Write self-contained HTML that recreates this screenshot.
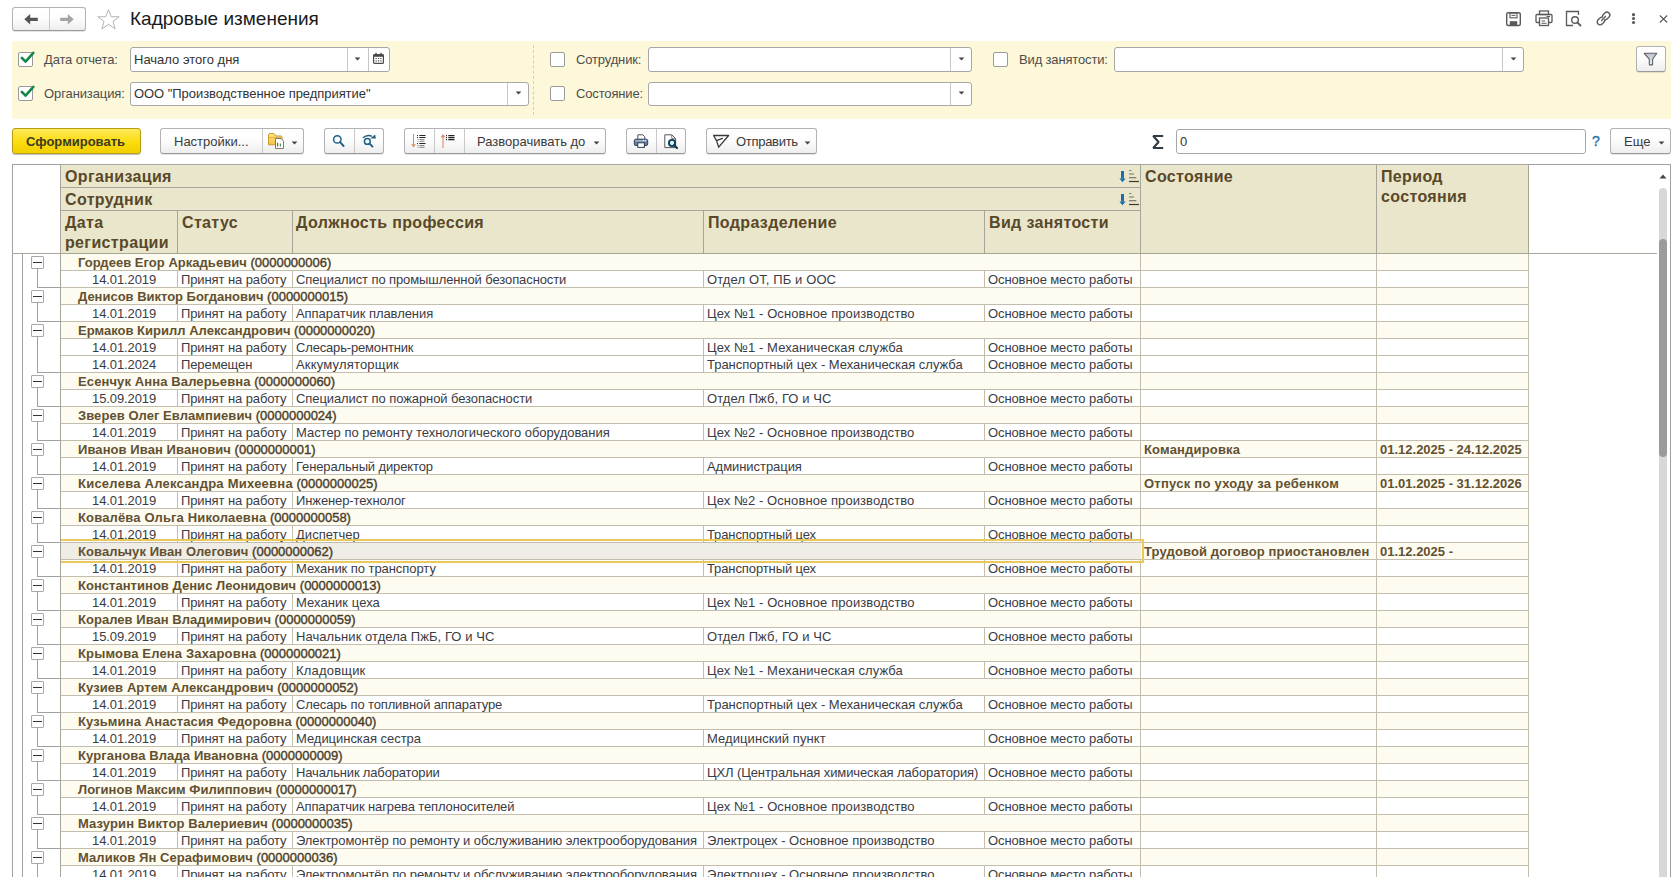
<!DOCTYPE html>
<html><head><meta charset="utf-8"><title>Кадровые изменения</title>
<style>
html,body{margin:0;padding:0;background:#fff;}
body{width:1676px;height:877px;overflow:hidden;position:relative;font-family:"Liberation Sans",sans-serif;}
.t{position:absolute;white-space:nowrap;font-family:"Liberation Sans",sans-serif;}
.b{position:absolute;}
</style></head><body>
<div class="b" style="left:12px;top:7px;width:74px;height:24px;background:linear-gradient(#ffffff,#fdfdfd 45%,#eeeeee);box-sizing:border-box;border:1px solid #b2b2b2;border-bottom-color:#9a9a9a;border-radius:3px;box-shadow:0 1px 0 rgba(0,0,0,.10);"></div>
<div class="b" style="left:49px;top:8px;width:1px;height:22px;background:#c8c8c8;"></div>
<svg class="b" style="left:24px;top:14px;" width="14" height="11" viewBox="0 0 14 11"><path d="M0.3 5.3L6.2 0V3.8H13.8V6.9H6.2V10.6Z" fill="#555"/></svg>
<svg class="b" style="left:60px;top:14px;" width="14" height="11" viewBox="0 0 14 11"><path d="M13.7 5.3L7.8 0V3.8H0.2V6.9H7.8V10.6Z" fill="#a4a4a4"/></svg>
<svg class="b" style="left:96px;top:7px;" width="25" height="24" viewBox="0 0 25 24"><path d="M12.5 2.6L15.2 9.7L23.2 9.8L17 14.4L19.1 21.9L12.5 17.3L5.9 21.9L8 14.4L1.8 9.8L9.8 9.7Z" fill="none" stroke="#b4b4b4" stroke-width="1" stroke-linejoin="miter"/></svg>
<div class="t" style="left:130px;top:7.42px;font-size:19px;line-height:24px;color:#1a1a1a;">Кадровые изменения</div>
<svg class="b" style="left:1505px;top:11px;" width="17" height="16" viewBox="0 0 17 16"><rect x="1.7" y="1.7" width="13.6" height="12.8" rx="1.5" fill="none" stroke="#5a5a5a" stroke-width="1.4"/><rect x="5" y="2" width="7" height="4.8" fill="none" stroke="#5a5a5a" stroke-width="1.1"/><path d="M6.5 4.4H10.5" stroke="#5a5a5a" stroke-width="1"/><rect x="4.8" y="10.2" width="7.4" height="4" fill="#5a5a5a"/></svg>
<svg class="b" style="left:1535px;top:10px;" width="18" height="17" viewBox="0 0 18 17"><rect x="4.5" y="1" width="9" height="3.5" fill="none" stroke="#5a5a5a" stroke-width="1.3"/><path d="M4 12.5H2Q1 12.5 1 11.5V5.5Q1 4.5 2 4.5H16Q17 4.5 17 5.5V11.5Q17 12.5 16 12.5H14" fill="none" stroke="#5a5a5a" stroke-width="1.3"/><rect x="4.5" y="8" width="9" height="7.5" fill="#fff" stroke="#5a5a5a" stroke-width="1.3"/><path d="M6.5 11H10M6.5 13.3H11.5" stroke="#5a5a5a" stroke-width="1"/><path d="M11.5 6.5H15" stroke="#5a5a5a" stroke-width="1"/></svg>
<svg class="b" style="left:1565px;top:10px;" width="18" height="17" viewBox="0 0 18 17"><path d="M8 15.5H1.5V1.5H13.5V5" fill="none" stroke="#5a5a5a" stroke-width="1.3"/><circle cx="10" cy="10" r="3.3" fill="none" stroke="#5a5a5a" stroke-width="1.4"/><path d="M12.3 12.3L15.5 15.5" stroke="#5a5a5a" stroke-width="1.8" stroke-linecap="round"/></svg>
<svg class="b" style="left:1595px;top:10px;" width="17" height="17" viewBox="0 0 17 17"><g transform="rotate(-45 8.5 8.5)" fill="none" stroke="#5a5a5a" stroke-width="1.4"><rect x="0.8" y="5.6" width="8.2" height="5.8" rx="2.9"/><rect x="8" y="5.6" width="8.2" height="5.8" rx="2.9"/></g><path d="M6.3 10.7L10.7 6.3" stroke="#fff" stroke-width="2.6"/><path d="M6.6 10.4L10.4 6.6" stroke="#5a5a5a" stroke-width="1.4" stroke-linecap="round"/></svg>
<svg class="b" style="left:1630px;top:12px;" width="7" height="13" viewBox="0 0 7 13"><circle cx="3.5" cy="2.7" r="1.6" fill="#5a5a5a"/><circle cx="3.5" cy="6.5" r="1.6" fill="#5a5a5a"/><circle cx="3.5" cy="10.5" r="1.6" fill="#5a5a5a"/></svg>
<svg class="b" style="left:1659px;top:15px;" width="9" height="8" viewBox="0 0 9 8"><path d="M0.8 0.5L8.2 7.5M8.2 0.5L0.8 7.5" stroke="#5a5a5a" stroke-width="1.1"/></svg>
<div class="b" style="left:12px;top:41px;width:1659px;height:78px;background:#fef8da;"></div>
<div class="b" style="left:18px;top:52px;width:15px;height:15px;background:#fff;box-sizing:border-box;border:1px solid #9a9a9a;border-radius:2px;"></div>
<svg class="b" style="left:19px;top:50px;" width="17" height="17" viewBox="0 0 17 17"><path d="M2.9 8L6.6 11.6L14.3 2.8" fill="none" stroke="#17864a" stroke-width="2.6" stroke-linecap="round" stroke-linejoin="round"/></svg>
<div class="t" style="left:44px;top:51.50px;font-size:13px;line-height:16px;color:#4d4d4d;letter-spacing:-0.15px;">Дата отчета:</div>
<div class="b" style="left:130px;top:47px;width:260px;height:25px;background:#fff;box-sizing:border-box;border:1px solid #a7a7a7;border-radius:3px;"></div>
<div class="b" style="left:347px;top:48px;width:1px;height:23px;background:#c6c6c6;"></div>
<div class="b" style="left:368px;top:48px;width:1px;height:23px;background:#c6c6c6;"></div>
<div class="t" style="left:134px;top:51.50px;font-size:13px;line-height:16px;color:#333;">Начало этого дня</div>
<svg class="b" style="left:354px;top:57px;" width="7" height="4" viewBox="0 0 7 4"><path d="M0.6 0.4H6.4L3.5 3.4Z" fill="#444"/></svg>
<svg class="b" style="left:373px;top:52px;" width="11" height="12" viewBox="0 0 11 12"><rect x="0.6" y="2.6" width="9.8" height="8.8" rx="1" fill="none" stroke="#4a4a4a" stroke-width="1.2"/><rect x="0.6" y="2.6" width="9.8" height="2.2" fill="#4a4a4a"/><path d="M3 0.8V3M8 0.8V3" stroke="#4a4a4a" stroke-width="1.3"/><path d="M2.5 6.5h1.3M4.85 6.5h1.3M7.2 6.5h1.3M2.5 8.9h1.3M4.85 8.9h1.3M7.2 8.9h1.3" stroke="#555" stroke-width="1.2"/></svg>
<div class="b" style="left:18px;top:86px;width:15px;height:15px;background:#fff;box-sizing:border-box;border:1px solid #9a9a9a;border-radius:2px;"></div>
<svg class="b" style="left:19px;top:84px;" width="17" height="17" viewBox="0 0 17 17"><path d="M2.9 8L6.6 11.6L14.3 2.8" fill="none" stroke="#17864a" stroke-width="2.6" stroke-linecap="round" stroke-linejoin="round"/></svg>
<div class="t" style="left:44px;top:85.50px;font-size:13px;line-height:16px;color:#4d4d4d;letter-spacing:-0.1px;">Организация:</div>
<div class="b" style="left:130px;top:82px;width:399px;height:24px;background:#fff;box-sizing:border-box;border:1px solid #a7a7a7;border-radius:3px;"></div>
<div class="b" style="left:507px;top:83px;width:1px;height:22px;background:#c6c6c6;"></div>
<div class="t" style="left:134px;top:85.50px;font-size:13px;line-height:16px;color:#333;letter-spacing:-0.05px;">ООО &quot;Производственное предприятие&quot;</div>
<svg class="b" style="left:515px;top:91px;" width="7" height="4" viewBox="0 0 7 4"><path d="M0.6 0.4H6.4L3.5 3.4Z" fill="#444"/></svg>
<div class="b" style="left:533px;top:45px;width:0;height:70px;border-left:1px dashed #d9d0a8;"></div>
<div class="b" style="left:550px;top:52px;width:15px;height:15px;background:#fff;box-sizing:border-box;border:1px solid #9a9a9a;border-radius:2px;"></div>
<div class="t" style="left:576px;top:51.50px;font-size:13px;line-height:16px;color:#4d4d4d;letter-spacing:-0.15px;">Сотрудник:</div>
<div class="b" style="left:648px;top:47px;width:324px;height:25px;background:#fff;box-sizing:border-box;border:1px solid #a7a7a7;border-radius:3px;"></div>
<div class="b" style="left:950px;top:48px;width:1px;height:23px;background:#c6c6c6;"></div>
<svg class="b" style="left:958px;top:57px;" width="7" height="4" viewBox="0 0 7 4"><path d="M0.6 0.4H6.4L3.5 3.4Z" fill="#444"/></svg>
<div class="b" style="left:550px;top:86px;width:15px;height:15px;background:#fff;box-sizing:border-box;border:1px solid #9a9a9a;border-radius:2px;"></div>
<div class="t" style="left:576px;top:85.50px;font-size:13px;line-height:16px;color:#4d4d4d;letter-spacing:-0.15px;">Состояние:</div>
<div class="b" style="left:648px;top:82px;width:324px;height:24px;background:#fff;box-sizing:border-box;border:1px solid #a7a7a7;border-radius:3px;"></div>
<div class="b" style="left:950px;top:83px;width:1px;height:22px;background:#c6c6c6;"></div>
<svg class="b" style="left:958px;top:91px;" width="7" height="4" viewBox="0 0 7 4"><path d="M0.6 0.4H6.4L3.5 3.4Z" fill="#444"/></svg>
<div class="b" style="left:993px;top:52px;width:15px;height:15px;background:#fff;box-sizing:border-box;border:1px solid #9a9a9a;border-radius:2px;"></div>
<div class="t" style="left:1019px;top:51.50px;font-size:13px;line-height:16px;color:#4d4d4d;letter-spacing:-0.15px;">Вид занятости:</div>
<div class="b" style="left:1114px;top:47px;width:410px;height:25px;background:#fff;box-sizing:border-box;border:1px solid #a7a7a7;border-radius:3px;"></div>
<div class="b" style="left:1502px;top:48px;width:1px;height:23px;background:#c6c6c6;"></div>
<svg class="b" style="left:1510px;top:57px;" width="7" height="4" viewBox="0 0 7 4"><path d="M0.6 0.4H6.4L3.5 3.4Z" fill="#444"/></svg>
<div class="b" style="left:1636px;top:46px;width:30px;height:26px;background:linear-gradient(#ffffff,#fdfdfd 45%,#eeeeee);box-sizing:border-box;border:1px solid #b2b2b2;border-bottom-color:#9a9a9a;border-radius:3px;box-shadow:0 1px 0 rgba(0,0,0,.10);"></div>
<svg class="b" style="left:1642px;top:51px;" width="17" height="16" viewBox="0 0 17 16"><defs><linearGradient id="fn" x1="0" y1="0" x2="0" y2="1"><stop offset="0" stop-color="#b9c2cc"/><stop offset="1" stop-color="#eef2f5"/></linearGradient></defs><path d="M2.2 2.3H14.8L10.6 8.2V13.2Q10.6 13.9 9.9 13.9H8Q7.3 13.9 7.3 13.2V8.2Z" fill="url(#fn)" stroke="#5f5f5f" stroke-width="1.1" stroke-linejoin="round"/></svg>
<div class="b" style="left:12px;top:128px;width:129px;height:26px;background:linear-gradient(#ffe95a,#fbdc0c 55%,#f2cf00);box-sizing:border-box;border:1px solid #b89d14;border-radius:3px;box-shadow:0 1px 1px rgba(0,0,0,.25);"></div>
<div class="t" style="left:26px;top:133.50px;font-size:13px;line-height:16px;font-weight:700;color:#3d3a26;">Сформировать</div>
<div class="b" style="left:160px;top:128px;width:144px;height:26px;background:linear-gradient(#ffffff,#fdfdfd 45%,#eeeeee);box-sizing:border-box;border:1px solid #b2b2b2;border-bottom-color:#9a9a9a;border-radius:3px;box-shadow:0 1px 0 rgba(0,0,0,.10);"></div>
<div class="b" style="left:262px;top:129px;width:1px;height:24px;background:#c8c8c8;"></div>
<div class="t" style="left:174px;top:133.50px;font-size:13px;line-height:16px;color:#3a3a3a;">Настройки...</div>
<svg class="b" style="left:266px;top:132px;" width="20" height="18" viewBox="0 0 20 18"><defs><linearGradient id="fg" x1="0" y1="0" x2="0" y2="1"><stop offset="0" stop-color="#ffe98a"/><stop offset="1" stop-color="#f0c040"/></linearGradient></defs><path d="M2.5 12.8V3.2Q2.5 1.5 4.2 1.5H7.2Q8.6 1.5 9.2 3L9.6 4H15Q16 4 16 5V12.8Z" fill="url(#fg)" stroke="#c99a2a" stroke-width="1"/><path d="M2.5 5.5H16" stroke="#d9ac3a" stroke-width=".8"/><path d="M9.5 6.5H15L17.5 9V16.5H9.5Z" fill="#fff" stroke="#7a7a7a" stroke-width="1"/><path d="M11.6 14.5V10.8" stroke="#c23a3a" stroke-width="1.2"/><path d="M14.4 14.5V11.5" stroke="#3aa04a" stroke-width="1.2"/></svg>
<svg class="b" style="left:291px;top:141px;" width="7" height="4" viewBox="0 0 7 4"><path d="M0.6 0.4H6.4L3.5 3.4Z" fill="#444"/></svg>
<div class="b" style="left:324px;top:128px;width:60px;height:26px;background:linear-gradient(#ffffff,#fdfdfd 45%,#eeeeee);box-sizing:border-box;border:1px solid #b2b2b2;border-bottom-color:#9a9a9a;border-radius:3px;box-shadow:0 1px 0 rgba(0,0,0,.10);"></div>
<div class="b" style="left:354px;top:129px;width:1px;height:24px;background:#c8c8c8;"></div>
<svg class="b" style="left:330px;top:132px;" width="18" height="18" viewBox="0 0 18 18"><circle cx="7.3" cy="7.4" r="3.7" fill="none" stroke="#1f5f87" stroke-width="1.5"/><path d="M10 10.2L13.6 14" stroke="#1f5f87" stroke-width="1.9" stroke-linecap="round"/></svg>
<svg class="b" style="left:360px;top:132px;" width="18" height="18" viewBox="0 0 18 18"><circle cx="7.3" cy="9.4" r="2.9" fill="none" stroke="#1f5f87" stroke-width="1.5"/><path d="M9.5 11.6L12.5 14.5" stroke="#1f5f87" stroke-width="1.8" stroke-linecap="round"/><path d="M3 5.8Q7 2.2 11.8 4.2" fill="none" stroke="#1f5f87" stroke-width="1.5"/><path d="M10.2 6.4L15.8 6.6L15.2 2.4Z" fill="#1f5f87"/></svg>
<div class="b" style="left:404px;top:128px;width:202px;height:26px;background:linear-gradient(#ffffff,#fdfdfd 45%,#eeeeee);box-sizing:border-box;border:1px solid #b2b2b2;border-bottom-color:#9a9a9a;border-radius:3px;box-shadow:0 1px 0 rgba(0,0,0,.10);"></div>
<div class="b" style="left:434px;top:129px;width:1px;height:24px;background:#c8c8c8;"></div>
<div class="b" style="left:464px;top:129px;width:1px;height:24px;background:#c8c8c8;"></div>
<svg class="b" style="left:410px;top:133px;" width="20" height="17" viewBox="0 0 20 17"><path d="M3.5 1V13.5" stroke="#dc8a68" stroke-width="1.1"/><path d="M1.2 11.2L3.5 14.6L5.8 11.2Z" fill="#dc8a68"/><path d="M7 2.5H8M9.3 2.5H15.5M7 4.5H8M9.3 4.5H15.5" stroke="#222" stroke-width="1.1"/><path d="M7.5 6.5H8.5M9.5 6.5H14.5M7.5 8.3H8.5M9.5 8.3H14.5" stroke="#666" stroke-width=".8"/><path d="M7 10.5H8M9.3 10.5H15.5" stroke="#222" stroke-width="1.1"/><path d="M7.5 12.5H8.5M9.5 12.5H14.5M7.5 14.3H8.5M9.5 14.3H14.5" stroke="#666" stroke-width=".8"/></svg>
<svg class="b" style="left:440px;top:132px;" width="20" height="17" viewBox="0 0 20 17"><path d="M3 3V16" stroke="#dc8a68" stroke-width="1.1"/><path d="M0.7 5.3L3 1.9L5.3 5.3Z" fill="#dc8a68"/><path d="M6 3.6H7M8.3 3.6H14.5M6 5.6H7M8.3 5.6H14.5M6 7.6H7M8.3 7.6H14.5" stroke="#222" stroke-width="1.1"/></svg>
<div class="t" style="left:477px;top:133.50px;font-size:13px;line-height:16px;color:#3a3a3a;">Разворачивать до</div>
<svg class="b" style="left:593px;top:141px;" width="7" height="4" viewBox="0 0 7 4"><path d="M0.6 0.4H6.4L3.5 3.4Z" fill="#444"/></svg>
<div class="b" style="left:626px;top:128px;width:60px;height:26px;background:linear-gradient(#ffffff,#fdfdfd 45%,#eeeeee);box-sizing:border-box;border:1px solid #b2b2b2;border-bottom-color:#9a9a9a;border-radius:3px;box-shadow:0 1px 0 rgba(0,0,0,.10);"></div>
<div class="b" style="left:656px;top:129px;width:1px;height:24px;background:#c8c8c8;"></div>
<svg class="b" style="left:632px;top:133px;" width="18" height="16" viewBox="0 0 18 16"><path d="M5.8 6V1.8H10.8L12.8 3.8V6" fill="#fff" stroke="#4a5560" stroke-width="1"/><rect x="2.3" y="6.2" width="13.4" height="6.3" rx="1.6" fill="#62809f" stroke="#2f3d52" stroke-width="1"/><path d="M3.5 7.9H14.5" stroke="#d0dae8" stroke-width=".9"/><path d="M11 7.3H12M13 7.3H14" stroke="#fff" stroke-width="1"/><rect x="5.8" y="9.8" width="6.6" height="4.6" fill="#fff" stroke="#2f3d52" stroke-width="1"/></svg>
<svg class="b" style="left:662px;top:132px;" width="18" height="18" viewBox="0 0 18 18"><path d="M2.8 2.8H9.8L13.6 6.6V15.6H2.8Z" fill="#fff" stroke="#5a5a5a" stroke-width="1"/><path d="M9.8 2.8V6.6H13.6" fill="none" stroke="#5a5a5a" stroke-width=".8"/><circle cx="10" cy="11" r="3.1" fill="#d8f4ff" stroke="#0d3f5a" stroke-width="1.9"/><path d="M12.2 13.2L15 16" stroke="#0d3f5a" stroke-width="2.2" stroke-linecap="round"/></svg>
<div class="b" style="left:706px;top:128px;width:111px;height:26px;background:linear-gradient(#ffffff,#fdfdfd 45%,#eeeeee);box-sizing:border-box;border:1px solid #b2b2b2;border-bottom-color:#9a9a9a;border-radius:3px;box-shadow:0 1px 0 rgba(0,0,0,.10);"></div>
<svg class="b" style="left:712px;top:134px;" width="18" height="15" viewBox="0 0 18 15"><path d="M1.6 1.5H16.6L6.7 13.2L4.5 6.6Z M4.5 6.6L10.4 4.3" fill="none" stroke="#3a3a3a" stroke-width="1.3" stroke-linejoin="round" stroke-linecap="round"/></svg>
<div class="t" style="left:736px;top:133.50px;font-size:13px;line-height:16px;color:#3a3a3a;letter-spacing:-0.3px;">Отправить</div>
<svg class="b" style="left:804px;top:141px;" width="7" height="4" viewBox="0 0 7 4"><path d="M0.6 0.4H6.4L3.5 3.4Z" fill="#444"/></svg>
<svg class="b" style="left:1150px;top:133px;" width="16" height="18" viewBox="0 0 16 18"><path d="M13.2 3H3.2L8.6 9L3.2 15H13.2" fill="none" stroke="#2f3b45" stroke-width="2.1" stroke-linejoin="bevel"/></svg>
<div class="b" style="left:1176px;top:129px;width:410px;height:25px;background:#fff;box-sizing:border-box;border:1px solid #a7a7a7;border-radius:3px;"></div>
<div class="t" style="left:1180px;top:133.50px;font-size:13px;line-height:16px;color:#333;">0</div>
<div class="t" style="left:1592px;top:132.15px;font-size:14px;line-height:18px;color:#2f74b0;-webkit-text-stroke:0.4px #2f74b0;">?</div>
<div class="b" style="left:1610px;top:128px;width:61px;height:26px;background:linear-gradient(#ffffff,#fdfdfd 45%,#eeeeee);box-sizing:border-box;border:1px solid #b2b2b2;border-bottom-color:#9a9a9a;border-radius:3px;box-shadow:0 1px 0 rgba(0,0,0,.10);"></div>
<div class="t" style="left:1624px;top:133.50px;font-size:13px;line-height:16px;color:#3a3a3a;">Еще</div>
<svg class="b" style="left:1658px;top:141px;" width="7" height="4" viewBox="0 0 7 4"><path d="M0.6 0.4H6.4L3.5 3.4Z" fill="#444"/></svg>
<div class="b" style="left:12px;top:164px;width:1659px;height:1px;background:#a0a0a0;"></div>
<div class="b" style="left:12px;top:164px;width:1px;height:713px;background:#a0a0a0;"></div>
<div class="b" style="left:1670px;top:164px;width:1px;height:713px;background:#a0a0a0;"></div>
<div class="b" style="left:61px;top:165px;width:1467px;height:88px;background:#e9e6cb;"></div>
<div class="b" style="left:60px;top:164px;width:1469px;height:1px;background:#a8a59a;"></div>
<div class="b" style="left:61px;top:187px;width:1079px;height:1px;background:#a8a59a;"></div>
<div class="b" style="left:61px;top:210px;width:1079px;height:1px;background:#a8a59a;"></div>
<div class="b" style="left:12px;top:253px;width:1645px;height:1px;background:#a8a59a;"></div>
<div class="b" style="left:60px;top:164px;width:1px;height:90px;background:#a8a59a;"></div>
<div class="b" style="left:1140px;top:164px;width:1px;height:90px;background:#a8a59a;"></div>
<div class="b" style="left:1376px;top:164px;width:1px;height:90px;background:#a8a59a;"></div>
<div class="b" style="left:1528px;top:164px;width:1px;height:90px;background:#a8a59a;"></div>
<div class="b" style="left:177px;top:210px;width:1px;height:44px;background:#a8a59a;"></div>
<div class="b" style="left:292px;top:210px;width:1px;height:44px;background:#a8a59a;"></div>
<div class="b" style="left:703px;top:210px;width:1px;height:44px;background:#a8a59a;"></div>
<div class="b" style="left:984px;top:210px;width:1px;height:44px;background:#a8a59a;"></div>
<div class="t" style="left:65px;top:167.46px;font-size:16px;line-height:20px;font-weight:700;color:#594829;letter-spacing:0.35px;">Организация</div>
<div class="t" style="left:65px;top:190.46px;font-size:16px;line-height:20px;font-weight:700;color:#594829;letter-spacing:0.35px;">Сотрудник</div>
<div class="t" style="left:65px;top:213.46px;font-size:16px;line-height:20px;font-weight:700;color:#594829;letter-spacing:0.35px;">Дата</div>
<div class="t" style="left:65px;top:233.46px;font-size:16px;line-height:20px;font-weight:700;color:#594829;letter-spacing:0.35px;">регистрации</div>
<div class="t" style="left:182px;top:213.46px;font-size:16px;line-height:20px;font-weight:700;color:#594829;letter-spacing:0.35px;">Статус</div>
<div class="t" style="left:296px;top:213.46px;font-size:16px;line-height:20px;font-weight:700;color:#594829;letter-spacing:0.35px;">Должность профессия</div>
<div class="t" style="left:708px;top:213.46px;font-size:16px;line-height:20px;font-weight:700;color:#594829;letter-spacing:0.35px;">Подразделение</div>
<div class="t" style="left:989px;top:213.46px;font-size:16px;line-height:20px;font-weight:700;color:#594829;letter-spacing:0.35px;">Вид занятости</div>
<div class="t" style="left:1145px;top:167.46px;font-size:16px;line-height:20px;font-weight:700;color:#594829;letter-spacing:0.35px;">Состояние</div>
<div class="t" style="left:1381px;top:167.46px;font-size:16px;line-height:20px;font-weight:700;color:#594829;letter-spacing:0.35px;">Период</div>
<div class="t" style="left:1381px;top:187.46px;font-size:16px;line-height:20px;font-weight:700;color:#594829;letter-spacing:0.35px;">состояния</div>
<svg class="b" style="left:1118px;top:169px;" width="22" height="15" viewBox="0 0 22 15"><rect x="3" y="2" width="3" height="7.6" fill="#1a6fa8"/><path d="M1.4 9.4H7.6L4.5 13.2Z" fill="#1a6fa8"/><path d="M11 1.5H13.5" stroke="#8a8570" stroke-width="1"/><path d="M11 5H16" stroke="#8a8570" stroke-width="1.2"/><path d="M11 8.7H18.3" stroke="#7a7560" stroke-width="1.2"/><path d="M11 12.5H21" stroke="#3e3a2a" stroke-width="1.2"/></svg>
<svg class="b" style="left:1118px;top:192px;" width="22" height="15" viewBox="0 0 22 15"><rect x="3" y="2" width="3" height="7.6" fill="#1a6fa8"/><path d="M1.4 9.4H7.6L4.5 13.2Z" fill="#1a6fa8"/><path d="M11 1.5H13.5" stroke="#8a8570" stroke-width="1"/><path d="M11 5H16" stroke="#8a8570" stroke-width="1.2"/><path d="M11 8.7H18.3" stroke="#7a7560" stroke-width="1.2"/><path d="M11 12.5H21" stroke="#3e3a2a" stroke-width="1.2"/></svg>
<svg class="b" style="left:1659px;top:174px;" width="8" height="5" viewBox="0 0 8 5"><path d="M0.5 4.5L4 0.5L7.5 4.5Z" fill="#444"/></svg>
<div class="b" style="left:1659px;top:188px;width:8px;height:689px;background:#d8d8d8;border-radius:4px 4px 0 0;"></div>
<div class="b" style="left:1659px;top:239px;width:8px;height:218px;background:#9b9b9b;border-radius:4px;"></div>
<div class="b" style="left:0;top:0;width:1676px;height:877px;overflow:hidden;clip-path:inset(254px 0 0 0);">
<div class="b" style="left:61px;top:254px;width:1079px;height:16px;background:#fefbf1;"></div>
<div class="b" style="left:1141px;top:254px;width:235px;height:16px;background:#fefbf1;"></div>
<div class="b" style="left:1377px;top:254px;width:151px;height:16px;background:#fefbf1;"></div>
<div class="b" style="left:61px;top:270px;width:1467px;height:1px;background:#c2bdac;"></div>
<div class="b" style="left:60px;top:253px;width:1px;height:18px;background:#a8a59a;"></div>
<div class="b" style="left:1140px;top:253px;width:1px;height:18px;background:#c2bdac;"></div>
<div class="b" style="left:1376px;top:253px;width:1px;height:18px;background:#c2bdac;"></div>
<div class="b" style="left:1528px;top:253px;width:1px;height:18px;background:#c2bdac;"></div>
<div class="t" style="left:78px;top:255.00px;font-size:13px;line-height:16px;font-weight:700;color:#625131;"><span style="letter-spacing:0.030px">Гордеев Егор Аркадьевич</span> <span style="font-weight:400;color:#4a3e2a;-webkit-text-stroke:0.4px #4a3e2a">(0000000006)</span></div>
<div class="b" style="left:31px;top:256px;width:13px;height:13px;background:#fff;box-sizing:border-box;border:1px solid #a9a9a9;border-radius:1px;"></div>
<div class="b" style="left:33px;top:262px;width:9px;height:1px;background:#333;"></div>
<div class="b" style="left:37px;top:268px;width:1px;height:20px;background:#a0a0a0;"></div>
<div class="b" style="left:37px;top:287px;width:24px;height:1px;background:#a0a0a0;"></div>
<div class="b" style="left:61px;top:271px;width:1467px;height:16px;background:#fff;"></div>
<div class="b" style="left:61px;top:287px;width:1467px;height:1px;background:#c2bdac;"></div>
<div class="b" style="left:60px;top:270px;width:1px;height:18px;background:#a8a59a;"></div>
<div class="b" style="left:177px;top:270px;width:1px;height:18px;background:#c2bdac;"></div>
<div class="b" style="left:292px;top:270px;width:1px;height:18px;background:#c2bdac;"></div>
<div class="b" style="left:703px;top:270px;width:1px;height:18px;background:#c2bdac;"></div>
<div class="b" style="left:984px;top:270px;width:1px;height:18px;background:#c2bdac;"></div>
<div class="b" style="left:1140px;top:270px;width:1px;height:18px;background:#c2bdac;"></div>
<div class="b" style="left:1376px;top:270px;width:1px;height:18px;background:#c2bdac;"></div>
<div class="b" style="left:1528px;top:270px;width:1px;height:18px;background:#c2bdac;"></div>
<div class="t" style="left:92px;top:271.50px;font-size:13px;line-height:16px;color:#3b3b42;letter-spacing:-0.1px;">14.01.2019</div>
<div class="t" style="left:181px;top:271.50px;font-size:13px;line-height:16px;color:#3b3b42;letter-spacing:-0.1px;">Принят на работу</div>
<div class="t" style="left:296px;top:271.50px;font-size:13px;line-height:16px;color:#3b3b42;letter-spacing:-0.097px;">Специалист по промышленной безопасности</div>
<div class="t" style="left:707px;top:271.50px;font-size:13px;line-height:16px;color:#3b3b42;letter-spacing:0.117px;">Отдел ОТ, ПБ и ООС</div>
<div class="t" style="left:988px;top:271.50px;font-size:13px;line-height:16px;color:#3b3b42;letter-spacing:-0.1px;">Основное место работы</div>
<div class="b" style="left:61px;top:288px;width:1079px;height:16px;background:#fefbf1;"></div>
<div class="b" style="left:1141px;top:288px;width:235px;height:16px;background:#fefbf1;"></div>
<div class="b" style="left:1377px;top:288px;width:151px;height:16px;background:#fefbf1;"></div>
<div class="b" style="left:61px;top:304px;width:1467px;height:1px;background:#c2bdac;"></div>
<div class="b" style="left:60px;top:287px;width:1px;height:18px;background:#a8a59a;"></div>
<div class="b" style="left:1140px;top:287px;width:1px;height:18px;background:#c2bdac;"></div>
<div class="b" style="left:1376px;top:287px;width:1px;height:18px;background:#c2bdac;"></div>
<div class="b" style="left:1528px;top:287px;width:1px;height:18px;background:#c2bdac;"></div>
<div class="t" style="left:78px;top:289.00px;font-size:13px;line-height:16px;font-weight:700;color:#625131;"><span style="letter-spacing:-0.016px">Денисов Виктор Богданович</span> <span style="font-weight:400;color:#4a3e2a;-webkit-text-stroke:0.4px #4a3e2a">(0000000015)</span></div>
<div class="b" style="left:31px;top:290px;width:13px;height:13px;background:#fff;box-sizing:border-box;border:1px solid #a9a9a9;border-radius:1px;"></div>
<div class="b" style="left:33px;top:296px;width:9px;height:1px;background:#333;"></div>
<div class="b" style="left:37px;top:302px;width:1px;height:20px;background:#a0a0a0;"></div>
<div class="b" style="left:37px;top:321px;width:24px;height:1px;background:#a0a0a0;"></div>
<div class="b" style="left:61px;top:305px;width:1467px;height:16px;background:#fff;"></div>
<div class="b" style="left:61px;top:321px;width:1467px;height:1px;background:#c2bdac;"></div>
<div class="b" style="left:60px;top:304px;width:1px;height:18px;background:#a8a59a;"></div>
<div class="b" style="left:177px;top:304px;width:1px;height:18px;background:#c2bdac;"></div>
<div class="b" style="left:292px;top:304px;width:1px;height:18px;background:#c2bdac;"></div>
<div class="b" style="left:703px;top:304px;width:1px;height:18px;background:#c2bdac;"></div>
<div class="b" style="left:984px;top:304px;width:1px;height:18px;background:#c2bdac;"></div>
<div class="b" style="left:1140px;top:304px;width:1px;height:18px;background:#c2bdac;"></div>
<div class="b" style="left:1376px;top:304px;width:1px;height:18px;background:#c2bdac;"></div>
<div class="b" style="left:1528px;top:304px;width:1px;height:18px;background:#c2bdac;"></div>
<div class="t" style="left:92px;top:305.50px;font-size:13px;line-height:16px;color:#3b3b42;letter-spacing:-0.1px;">14.01.2019</div>
<div class="t" style="left:181px;top:305.50px;font-size:13px;line-height:16px;color:#3b3b42;letter-spacing:-0.1px;">Принят на работу</div>
<div class="t" style="left:296px;top:305.50px;font-size:13px;line-height:16px;color:#3b3b42;letter-spacing:-0.05px;">Аппаратчик плавления</div>
<div class="t" style="left:707px;top:305.50px;font-size:13px;line-height:16px;color:#3b3b42;letter-spacing:0.086px;">Цех №1 - Основное производство</div>
<div class="t" style="left:988px;top:305.50px;font-size:13px;line-height:16px;color:#3b3b42;letter-spacing:-0.1px;">Основное место работы</div>
<div class="b" style="left:61px;top:322px;width:1079px;height:16px;background:#fefbf1;"></div>
<div class="b" style="left:1141px;top:322px;width:235px;height:16px;background:#fefbf1;"></div>
<div class="b" style="left:1377px;top:322px;width:151px;height:16px;background:#fefbf1;"></div>
<div class="b" style="left:61px;top:338px;width:1467px;height:1px;background:#c2bdac;"></div>
<div class="b" style="left:60px;top:321px;width:1px;height:18px;background:#a8a59a;"></div>
<div class="b" style="left:1140px;top:321px;width:1px;height:18px;background:#c2bdac;"></div>
<div class="b" style="left:1376px;top:321px;width:1px;height:18px;background:#c2bdac;"></div>
<div class="b" style="left:1528px;top:321px;width:1px;height:18px;background:#c2bdac;"></div>
<div class="t" style="left:78px;top:323.00px;font-size:13px;line-height:16px;font-weight:700;color:#625131;"><span style="letter-spacing:0.011px">Ермаков Кирилл Александрович</span> <span style="font-weight:400;color:#4a3e2a;-webkit-text-stroke:0.4px #4a3e2a">(0000000020)</span></div>
<div class="b" style="left:31px;top:324px;width:13px;height:13px;background:#fff;box-sizing:border-box;border:1px solid #a9a9a9;border-radius:1px;"></div>
<div class="b" style="left:33px;top:330px;width:9px;height:1px;background:#333;"></div>
<div class="b" style="left:37px;top:336px;width:1px;height:37px;background:#a0a0a0;"></div>
<div class="b" style="left:37px;top:372px;width:24px;height:1px;background:#a0a0a0;"></div>
<div class="b" style="left:61px;top:339px;width:1467px;height:16px;background:#fff;"></div>
<div class="b" style="left:61px;top:355px;width:1467px;height:1px;background:#c2bdac;"></div>
<div class="b" style="left:60px;top:338px;width:1px;height:18px;background:#a8a59a;"></div>
<div class="b" style="left:177px;top:338px;width:1px;height:18px;background:#c2bdac;"></div>
<div class="b" style="left:292px;top:338px;width:1px;height:18px;background:#c2bdac;"></div>
<div class="b" style="left:703px;top:338px;width:1px;height:18px;background:#c2bdac;"></div>
<div class="b" style="left:984px;top:338px;width:1px;height:18px;background:#c2bdac;"></div>
<div class="b" style="left:1140px;top:338px;width:1px;height:18px;background:#c2bdac;"></div>
<div class="b" style="left:1376px;top:338px;width:1px;height:18px;background:#c2bdac;"></div>
<div class="b" style="left:1528px;top:338px;width:1px;height:18px;background:#c2bdac;"></div>
<div class="t" style="left:92px;top:339.50px;font-size:13px;line-height:16px;color:#3b3b42;letter-spacing:-0.1px;">14.01.2019</div>
<div class="t" style="left:181px;top:339.50px;font-size:13px;line-height:16px;color:#3b3b42;letter-spacing:-0.1px;">Принят на работу</div>
<div class="t" style="left:296px;top:339.50px;font-size:13px;line-height:16px;color:#3b3b42;letter-spacing:-0.165px;">Слесарь-ремонтник</div>
<div class="t" style="left:707px;top:339.50px;font-size:13px;line-height:16px;color:#3b3b42;letter-spacing:0.08px;">Цех №1 - Механическая служба</div>
<div class="t" style="left:988px;top:339.50px;font-size:13px;line-height:16px;color:#3b3b42;letter-spacing:-0.1px;">Основное место работы</div>
<div class="b" style="left:61px;top:356px;width:1467px;height:16px;background:#fff;"></div>
<div class="b" style="left:61px;top:372px;width:1467px;height:1px;background:#c2bdac;"></div>
<div class="b" style="left:60px;top:355px;width:1px;height:18px;background:#a8a59a;"></div>
<div class="b" style="left:177px;top:355px;width:1px;height:18px;background:#c2bdac;"></div>
<div class="b" style="left:292px;top:355px;width:1px;height:18px;background:#c2bdac;"></div>
<div class="b" style="left:703px;top:355px;width:1px;height:18px;background:#c2bdac;"></div>
<div class="b" style="left:984px;top:355px;width:1px;height:18px;background:#c2bdac;"></div>
<div class="b" style="left:1140px;top:355px;width:1px;height:18px;background:#c2bdac;"></div>
<div class="b" style="left:1376px;top:355px;width:1px;height:18px;background:#c2bdac;"></div>
<div class="b" style="left:1528px;top:355px;width:1px;height:18px;background:#c2bdac;"></div>
<div class="t" style="left:92px;top:356.50px;font-size:13px;line-height:16px;color:#3b3b42;letter-spacing:-0.1px;">14.01.2024</div>
<div class="t" style="left:181px;top:356.50px;font-size:13px;line-height:16px;color:#3b3b42;letter-spacing:-0.1px;">Перемещен</div>
<div class="t" style="left:296px;top:356.50px;font-size:13px;line-height:16px;color:#3b3b42;letter-spacing:0.186px;">Аккумуляторщик</div>
<div class="t" style="left:707px;top:356.50px;font-size:13px;line-height:16px;color:#3b3b42;letter-spacing:-0.02px;">Транспортный цех - Механическая служба</div>
<div class="t" style="left:988px;top:356.50px;font-size:13px;line-height:16px;color:#3b3b42;letter-spacing:-0.1px;">Основное место работы</div>
<div class="b" style="left:61px;top:373px;width:1079px;height:16px;background:#fefbf1;"></div>
<div class="b" style="left:1141px;top:373px;width:235px;height:16px;background:#fefbf1;"></div>
<div class="b" style="left:1377px;top:373px;width:151px;height:16px;background:#fefbf1;"></div>
<div class="b" style="left:61px;top:389px;width:1467px;height:1px;background:#c2bdac;"></div>
<div class="b" style="left:60px;top:372px;width:1px;height:18px;background:#a8a59a;"></div>
<div class="b" style="left:1140px;top:372px;width:1px;height:18px;background:#c2bdac;"></div>
<div class="b" style="left:1376px;top:372px;width:1px;height:18px;background:#c2bdac;"></div>
<div class="b" style="left:1528px;top:372px;width:1px;height:18px;background:#c2bdac;"></div>
<div class="t" style="left:78px;top:374.00px;font-size:13px;line-height:16px;font-weight:700;color:#625131;"><span style="letter-spacing:0.113px">Есенчук Анна Валерьевна</span> <span style="font-weight:400;color:#4a3e2a;-webkit-text-stroke:0.4px #4a3e2a">(0000000060)</span></div>
<div class="b" style="left:31px;top:375px;width:13px;height:13px;background:#fff;box-sizing:border-box;border:1px solid #a9a9a9;border-radius:1px;"></div>
<div class="b" style="left:33px;top:381px;width:9px;height:1px;background:#333;"></div>
<div class="b" style="left:37px;top:387px;width:1px;height:20px;background:#a0a0a0;"></div>
<div class="b" style="left:37px;top:406px;width:24px;height:1px;background:#a0a0a0;"></div>
<div class="b" style="left:61px;top:390px;width:1467px;height:16px;background:#fff;"></div>
<div class="b" style="left:61px;top:406px;width:1467px;height:1px;background:#c2bdac;"></div>
<div class="b" style="left:60px;top:389px;width:1px;height:18px;background:#a8a59a;"></div>
<div class="b" style="left:177px;top:389px;width:1px;height:18px;background:#c2bdac;"></div>
<div class="b" style="left:292px;top:389px;width:1px;height:18px;background:#c2bdac;"></div>
<div class="b" style="left:703px;top:389px;width:1px;height:18px;background:#c2bdac;"></div>
<div class="b" style="left:984px;top:389px;width:1px;height:18px;background:#c2bdac;"></div>
<div class="b" style="left:1140px;top:389px;width:1px;height:18px;background:#c2bdac;"></div>
<div class="b" style="left:1376px;top:389px;width:1px;height:18px;background:#c2bdac;"></div>
<div class="b" style="left:1528px;top:389px;width:1px;height:18px;background:#c2bdac;"></div>
<div class="t" style="left:92px;top:390.50px;font-size:13px;line-height:16px;color:#3b3b42;letter-spacing:-0.1px;">15.09.2019</div>
<div class="t" style="left:181px;top:390.50px;font-size:13px;line-height:16px;color:#3b3b42;letter-spacing:-0.1px;">Принят на работу</div>
<div class="t" style="left:296px;top:390.50px;font-size:13px;line-height:16px;color:#3b3b42;letter-spacing:-0.083px;">Специалист по пожарной безопасности</div>
<div class="t" style="left:707px;top:390.50px;font-size:13px;line-height:16px;color:#3b3b42;letter-spacing:0.078px;">Отдел Пжб, ГО и ЧС</div>
<div class="t" style="left:988px;top:390.50px;font-size:13px;line-height:16px;color:#3b3b42;letter-spacing:-0.1px;">Основное место работы</div>
<div class="b" style="left:61px;top:407px;width:1079px;height:16px;background:#fefbf1;"></div>
<div class="b" style="left:1141px;top:407px;width:235px;height:16px;background:#fefbf1;"></div>
<div class="b" style="left:1377px;top:407px;width:151px;height:16px;background:#fefbf1;"></div>
<div class="b" style="left:61px;top:423px;width:1467px;height:1px;background:#c2bdac;"></div>
<div class="b" style="left:60px;top:406px;width:1px;height:18px;background:#a8a59a;"></div>
<div class="b" style="left:1140px;top:406px;width:1px;height:18px;background:#c2bdac;"></div>
<div class="b" style="left:1376px;top:406px;width:1px;height:18px;background:#c2bdac;"></div>
<div class="b" style="left:1528px;top:406px;width:1px;height:18px;background:#c2bdac;"></div>
<div class="t" style="left:78px;top:408.00px;font-size:13px;line-height:16px;font-weight:700;color:#625131;"><span style="letter-spacing:0.070px">Зверев Олег Евлампиевич</span> <span style="font-weight:400;color:#4a3e2a;-webkit-text-stroke:0.4px #4a3e2a">(0000000024)</span></div>
<div class="b" style="left:31px;top:409px;width:13px;height:13px;background:#fff;box-sizing:border-box;border:1px solid #a9a9a9;border-radius:1px;"></div>
<div class="b" style="left:33px;top:415px;width:9px;height:1px;background:#333;"></div>
<div class="b" style="left:37px;top:421px;width:1px;height:20px;background:#a0a0a0;"></div>
<div class="b" style="left:37px;top:440px;width:24px;height:1px;background:#a0a0a0;"></div>
<div class="b" style="left:61px;top:424px;width:1467px;height:16px;background:#fff;"></div>
<div class="b" style="left:61px;top:440px;width:1467px;height:1px;background:#c2bdac;"></div>
<div class="b" style="left:60px;top:423px;width:1px;height:18px;background:#a8a59a;"></div>
<div class="b" style="left:177px;top:423px;width:1px;height:18px;background:#c2bdac;"></div>
<div class="b" style="left:292px;top:423px;width:1px;height:18px;background:#c2bdac;"></div>
<div class="b" style="left:703px;top:423px;width:1px;height:18px;background:#c2bdac;"></div>
<div class="b" style="left:984px;top:423px;width:1px;height:18px;background:#c2bdac;"></div>
<div class="b" style="left:1140px;top:423px;width:1px;height:18px;background:#c2bdac;"></div>
<div class="b" style="left:1376px;top:423px;width:1px;height:18px;background:#c2bdac;"></div>
<div class="b" style="left:1528px;top:423px;width:1px;height:18px;background:#c2bdac;"></div>
<div class="t" style="left:92px;top:424.50px;font-size:13px;line-height:16px;color:#3b3b42;letter-spacing:-0.1px;">14.01.2019</div>
<div class="t" style="left:181px;top:424.50px;font-size:13px;line-height:16px;color:#3b3b42;letter-spacing:-0.1px;">Принят на работу</div>
<div class="t" style="left:296px;top:424.50px;font-size:13px;line-height:16px;color:#3b3b42;letter-spacing:-0.028px;">Мастер по ремонту технологического оборудования</div>
<div class="t" style="left:707px;top:424.50px;font-size:13px;line-height:16px;color:#3b3b42;letter-spacing:0.077px;">Цех №2 - Основное производство</div>
<div class="t" style="left:988px;top:424.50px;font-size:13px;line-height:16px;color:#3b3b42;letter-spacing:-0.1px;">Основное место работы</div>
<div class="b" style="left:61px;top:441px;width:1079px;height:16px;background:#fefbf1;"></div>
<div class="b" style="left:1141px;top:441px;width:235px;height:16px;background:#fefbf1;"></div>
<div class="b" style="left:1377px;top:441px;width:151px;height:16px;background:#fefbf1;"></div>
<div class="b" style="left:61px;top:457px;width:1467px;height:1px;background:#c2bdac;"></div>
<div class="b" style="left:60px;top:440px;width:1px;height:18px;background:#a8a59a;"></div>
<div class="b" style="left:1140px;top:440px;width:1px;height:18px;background:#c2bdac;"></div>
<div class="b" style="left:1376px;top:440px;width:1px;height:18px;background:#c2bdac;"></div>
<div class="b" style="left:1528px;top:440px;width:1px;height:18px;background:#c2bdac;"></div>
<div class="t" style="left:78px;top:442.00px;font-size:13px;line-height:16px;font-weight:700;color:#625131;"><span style="letter-spacing:0.080px">Иванов Иван Иванович</span> <span style="font-weight:400;color:#4a3e2a;-webkit-text-stroke:0.4px #4a3e2a">(0000000001)</span></div>
<div class="t" style="left:1144px;top:441.50px;font-size:13px;line-height:16px;font-weight:700;color:#625131;letter-spacing:0.17px;">Командировка</div>
<div class="t" style="left:1380px;top:441.50px;font-size:13px;line-height:16px;font-weight:700;color:#625131;">01.12.2025 - 24.12.2025</div>
<div class="b" style="left:31px;top:443px;width:13px;height:13px;background:#fff;box-sizing:border-box;border:1px solid #a9a9a9;border-radius:1px;"></div>
<div class="b" style="left:33px;top:449px;width:9px;height:1px;background:#333;"></div>
<div class="b" style="left:37px;top:455px;width:1px;height:20px;background:#a0a0a0;"></div>
<div class="b" style="left:37px;top:474px;width:24px;height:1px;background:#a0a0a0;"></div>
<div class="b" style="left:61px;top:458px;width:1467px;height:16px;background:#fff;"></div>
<div class="b" style="left:61px;top:474px;width:1467px;height:1px;background:#c2bdac;"></div>
<div class="b" style="left:60px;top:457px;width:1px;height:18px;background:#a8a59a;"></div>
<div class="b" style="left:177px;top:457px;width:1px;height:18px;background:#c2bdac;"></div>
<div class="b" style="left:292px;top:457px;width:1px;height:18px;background:#c2bdac;"></div>
<div class="b" style="left:703px;top:457px;width:1px;height:18px;background:#c2bdac;"></div>
<div class="b" style="left:984px;top:457px;width:1px;height:18px;background:#c2bdac;"></div>
<div class="b" style="left:1140px;top:457px;width:1px;height:18px;background:#c2bdac;"></div>
<div class="b" style="left:1376px;top:457px;width:1px;height:18px;background:#c2bdac;"></div>
<div class="b" style="left:1528px;top:457px;width:1px;height:18px;background:#c2bdac;"></div>
<div class="t" style="left:92px;top:458.50px;font-size:13px;line-height:16px;color:#3b3b42;letter-spacing:-0.1px;">14.01.2019</div>
<div class="t" style="left:181px;top:458.50px;font-size:13px;line-height:16px;color:#3b3b42;letter-spacing:-0.1px;">Принят на работу</div>
<div class="t" style="left:296px;top:458.50px;font-size:13px;line-height:16px;color:#3b3b42;letter-spacing:-0.13px;">Генеральный директор</div>
<div class="t" style="left:707px;top:458.50px;font-size:13px;line-height:16px;color:#3b3b42;letter-spacing:-0.054px;">Администрация</div>
<div class="t" style="left:988px;top:458.50px;font-size:13px;line-height:16px;color:#3b3b42;letter-spacing:-0.1px;">Основное место работы</div>
<div class="b" style="left:61px;top:475px;width:1079px;height:16px;background:#fefbf1;"></div>
<div class="b" style="left:1141px;top:475px;width:235px;height:16px;background:#fefbf1;"></div>
<div class="b" style="left:1377px;top:475px;width:151px;height:16px;background:#fefbf1;"></div>
<div class="b" style="left:61px;top:491px;width:1467px;height:1px;background:#c2bdac;"></div>
<div class="b" style="left:60px;top:474px;width:1px;height:18px;background:#a8a59a;"></div>
<div class="b" style="left:1140px;top:474px;width:1px;height:18px;background:#c2bdac;"></div>
<div class="b" style="left:1376px;top:474px;width:1px;height:18px;background:#c2bdac;"></div>
<div class="b" style="left:1528px;top:474px;width:1px;height:18px;background:#c2bdac;"></div>
<div class="t" style="left:78px;top:476.00px;font-size:13px;line-height:16px;font-weight:700;color:#625131;"><span style="letter-spacing:0.239px">Киселева Александра Михеевна</span> <span style="font-weight:400;color:#4a3e2a;-webkit-text-stroke:0.4px #4a3e2a">(0000000025)</span></div>
<div class="t" style="left:1144px;top:475.50px;font-size:13px;line-height:16px;font-weight:700;color:#625131;letter-spacing:0.25px;">Отпуск по уходу за ребенком</div>
<div class="t" style="left:1380px;top:475.50px;font-size:13px;line-height:16px;font-weight:700;color:#625131;">01.01.2025 - 31.12.2026</div>
<div class="b" style="left:31px;top:477px;width:13px;height:13px;background:#fff;box-sizing:border-box;border:1px solid #a9a9a9;border-radius:1px;"></div>
<div class="b" style="left:33px;top:483px;width:9px;height:1px;background:#333;"></div>
<div class="b" style="left:37px;top:489px;width:1px;height:20px;background:#a0a0a0;"></div>
<div class="b" style="left:37px;top:508px;width:24px;height:1px;background:#a0a0a0;"></div>
<div class="b" style="left:61px;top:492px;width:1467px;height:16px;background:#fff;"></div>
<div class="b" style="left:61px;top:508px;width:1467px;height:1px;background:#c2bdac;"></div>
<div class="b" style="left:60px;top:491px;width:1px;height:18px;background:#a8a59a;"></div>
<div class="b" style="left:177px;top:491px;width:1px;height:18px;background:#c2bdac;"></div>
<div class="b" style="left:292px;top:491px;width:1px;height:18px;background:#c2bdac;"></div>
<div class="b" style="left:703px;top:491px;width:1px;height:18px;background:#c2bdac;"></div>
<div class="b" style="left:984px;top:491px;width:1px;height:18px;background:#c2bdac;"></div>
<div class="b" style="left:1140px;top:491px;width:1px;height:18px;background:#c2bdac;"></div>
<div class="b" style="left:1376px;top:491px;width:1px;height:18px;background:#c2bdac;"></div>
<div class="b" style="left:1528px;top:491px;width:1px;height:18px;background:#c2bdac;"></div>
<div class="t" style="left:92px;top:492.50px;font-size:13px;line-height:16px;color:#3b3b42;letter-spacing:-0.1px;">14.01.2019</div>
<div class="t" style="left:181px;top:492.50px;font-size:13px;line-height:16px;color:#3b3b42;letter-spacing:-0.1px;">Принят на работу</div>
<div class="t" style="left:296px;top:492.50px;font-size:13px;line-height:16px;color:#3b3b42;letter-spacing:-0.113px;">Инженер-технолог</div>
<div class="t" style="left:707px;top:492.50px;font-size:13px;line-height:16px;color:#3b3b42;letter-spacing:0.077px;">Цех №2 - Основное производство</div>
<div class="t" style="left:988px;top:492.50px;font-size:13px;line-height:16px;color:#3b3b42;letter-spacing:-0.1px;">Основное место работы</div>
<div class="b" style="left:61px;top:509px;width:1079px;height:16px;background:#fefbf1;"></div>
<div class="b" style="left:1141px;top:509px;width:235px;height:16px;background:#fefbf1;"></div>
<div class="b" style="left:1377px;top:509px;width:151px;height:16px;background:#fefbf1;"></div>
<div class="b" style="left:61px;top:525px;width:1467px;height:1px;background:#c2bdac;"></div>
<div class="b" style="left:60px;top:508px;width:1px;height:18px;background:#a8a59a;"></div>
<div class="b" style="left:1140px;top:508px;width:1px;height:18px;background:#c2bdac;"></div>
<div class="b" style="left:1376px;top:508px;width:1px;height:18px;background:#c2bdac;"></div>
<div class="b" style="left:1528px;top:508px;width:1px;height:18px;background:#c2bdac;"></div>
<div class="t" style="left:78px;top:510.00px;font-size:13px;line-height:16px;font-weight:700;color:#625131;"><span style="letter-spacing:0.148px">Ковалёва Ольга Николаевна</span> <span style="font-weight:400;color:#4a3e2a;-webkit-text-stroke:0.4px #4a3e2a">(0000000058)</span></div>
<div class="b" style="left:31px;top:511px;width:13px;height:13px;background:#fff;box-sizing:border-box;border:1px solid #a9a9a9;border-radius:1px;"></div>
<div class="b" style="left:33px;top:517px;width:9px;height:1px;background:#333;"></div>
<div class="b" style="left:37px;top:523px;width:1px;height:20px;background:#a0a0a0;"></div>
<div class="b" style="left:37px;top:542px;width:24px;height:1px;background:#a0a0a0;"></div>
<div class="b" style="left:61px;top:526px;width:1467px;height:16px;background:#fff;"></div>
<div class="b" style="left:61px;top:542px;width:1467px;height:1px;background:#c2bdac;"></div>
<div class="b" style="left:60px;top:525px;width:1px;height:18px;background:#a8a59a;"></div>
<div class="b" style="left:177px;top:525px;width:1px;height:18px;background:#c2bdac;"></div>
<div class="b" style="left:292px;top:525px;width:1px;height:18px;background:#c2bdac;"></div>
<div class="b" style="left:703px;top:525px;width:1px;height:18px;background:#c2bdac;"></div>
<div class="b" style="left:984px;top:525px;width:1px;height:18px;background:#c2bdac;"></div>
<div class="b" style="left:1140px;top:525px;width:1px;height:18px;background:#c2bdac;"></div>
<div class="b" style="left:1376px;top:525px;width:1px;height:18px;background:#c2bdac;"></div>
<div class="b" style="left:1528px;top:525px;width:1px;height:18px;background:#c2bdac;"></div>
<div class="t" style="left:92px;top:526.50px;font-size:13px;line-height:16px;color:#3b3b42;letter-spacing:-0.1px;">14.01.2019</div>
<div class="t" style="left:181px;top:526.50px;font-size:13px;line-height:16px;color:#3b3b42;letter-spacing:-0.1px;">Принят на работу</div>
<div class="t" style="left:296px;top:526.50px;font-size:13px;line-height:16px;color:#3b3b42;letter-spacing:0.033px;">Диспетчер</div>
<div class="t" style="left:707px;top:526.50px;font-size:13px;line-height:16px;color:#3b3b42;letter-spacing:-0.106px;">Транспортный цех</div>
<div class="t" style="left:988px;top:526.50px;font-size:13px;line-height:16px;color:#3b3b42;letter-spacing:-0.1px;">Основное место работы</div>
<div class="b" style="left:61px;top:543px;width:1079px;height:16px;background:#efede6;"></div>
<div class="b" style="left:1141px;top:543px;width:235px;height:16px;background:#fefbf1;"></div>
<div class="b" style="left:1377px;top:543px;width:151px;height:16px;background:#fefbf1;"></div>
<div class="b" style="left:61px;top:559px;width:1467px;height:1px;background:#c2bdac;"></div>
<div class="b" style="left:60px;top:542px;width:1px;height:18px;background:#a8a59a;"></div>
<div class="b" style="left:1376px;top:542px;width:1px;height:18px;background:#c2bdac;"></div>
<div class="b" style="left:1528px;top:542px;width:1px;height:18px;background:#c2bdac;"></div>
<div class="b" style="left:1140px;top:543px;width:1px;height:16px;background:#efede6;"></div>
<div class="t" style="left:78px;top:544.00px;font-size:13px;line-height:16px;font-weight:700;color:#625131;"><span style="letter-spacing:0.074px">Ковальчук Иван Олегович</span> <span style="font-weight:400;color:#4a3e2a;-webkit-text-stroke:0.4px #4a3e2a">(0000000062)</span></div>
<div class="t" style="left:1144px;top:543.50px;font-size:13px;line-height:16px;font-weight:700;color:#625131;letter-spacing:0.13px;">Трудовой договор приостановлен</div>
<div class="t" style="left:1380px;top:543.50px;font-size:13px;line-height:16px;font-weight:700;color:#625131;">01.12.2025 -</div>
<div class="b" style="left:31px;top:545px;width:13px;height:13px;background:#fff;box-sizing:border-box;border:1px solid #a9a9a9;border-radius:1px;"></div>
<div class="b" style="left:33px;top:551px;width:9px;height:1px;background:#333;"></div>
<div class="b" style="left:37px;top:557px;width:1px;height:20px;background:#a0a0a0;"></div>
<div class="b" style="left:37px;top:576px;width:24px;height:1px;background:#a0a0a0;"></div>
<div class="b" style="left:61px;top:560px;width:1467px;height:16px;background:#fff;"></div>
<div class="b" style="left:61px;top:576px;width:1467px;height:1px;background:#c2bdac;"></div>
<div class="b" style="left:60px;top:559px;width:1px;height:18px;background:#a8a59a;"></div>
<div class="b" style="left:177px;top:559px;width:1px;height:18px;background:#c2bdac;"></div>
<div class="b" style="left:292px;top:559px;width:1px;height:18px;background:#c2bdac;"></div>
<div class="b" style="left:703px;top:559px;width:1px;height:18px;background:#c2bdac;"></div>
<div class="b" style="left:984px;top:559px;width:1px;height:18px;background:#c2bdac;"></div>
<div class="b" style="left:1140px;top:559px;width:1px;height:18px;background:#c2bdac;"></div>
<div class="b" style="left:1376px;top:559px;width:1px;height:18px;background:#c2bdac;"></div>
<div class="b" style="left:1528px;top:559px;width:1px;height:18px;background:#c2bdac;"></div>
<div class="t" style="left:92px;top:560.50px;font-size:13px;line-height:16px;color:#3b3b42;letter-spacing:-0.1px;">14.01.2019</div>
<div class="t" style="left:181px;top:560.50px;font-size:13px;line-height:16px;color:#3b3b42;letter-spacing:-0.1px;">Принят на работу</div>
<div class="t" style="left:296px;top:560.50px;font-size:13px;line-height:16px;color:#3b3b42;letter-spacing:-0.057px;">Механик по транспорту</div>
<div class="t" style="left:707px;top:560.50px;font-size:13px;line-height:16px;color:#3b3b42;letter-spacing:-0.106px;">Транспортный цех</div>
<div class="t" style="left:988px;top:560.50px;font-size:13px;line-height:16px;color:#3b3b42;letter-spacing:-0.1px;">Основное место работы</div>
<div class="b" style="left:61px;top:577px;width:1079px;height:16px;background:#fefbf1;"></div>
<div class="b" style="left:1141px;top:577px;width:235px;height:16px;background:#fefbf1;"></div>
<div class="b" style="left:1377px;top:577px;width:151px;height:16px;background:#fefbf1;"></div>
<div class="b" style="left:61px;top:593px;width:1467px;height:1px;background:#c2bdac;"></div>
<div class="b" style="left:60px;top:576px;width:1px;height:18px;background:#a8a59a;"></div>
<div class="b" style="left:1140px;top:576px;width:1px;height:18px;background:#c2bdac;"></div>
<div class="b" style="left:1376px;top:576px;width:1px;height:18px;background:#c2bdac;"></div>
<div class="b" style="left:1528px;top:576px;width:1px;height:18px;background:#c2bdac;"></div>
<div class="t" style="left:78px;top:578.00px;font-size:13px;line-height:16px;font-weight:700;color:#625131;"><span style="letter-spacing:0.028px">Константинов Денис Леонидович</span> <span style="font-weight:400;color:#4a3e2a;-webkit-text-stroke:0.4px #4a3e2a">(0000000013)</span></div>
<div class="b" style="left:31px;top:579px;width:13px;height:13px;background:#fff;box-sizing:border-box;border:1px solid #a9a9a9;border-radius:1px;"></div>
<div class="b" style="left:33px;top:585px;width:9px;height:1px;background:#333;"></div>
<div class="b" style="left:37px;top:591px;width:1px;height:20px;background:#a0a0a0;"></div>
<div class="b" style="left:37px;top:610px;width:24px;height:1px;background:#a0a0a0;"></div>
<div class="b" style="left:61px;top:594px;width:1467px;height:16px;background:#fff;"></div>
<div class="b" style="left:61px;top:610px;width:1467px;height:1px;background:#c2bdac;"></div>
<div class="b" style="left:60px;top:593px;width:1px;height:18px;background:#a8a59a;"></div>
<div class="b" style="left:177px;top:593px;width:1px;height:18px;background:#c2bdac;"></div>
<div class="b" style="left:292px;top:593px;width:1px;height:18px;background:#c2bdac;"></div>
<div class="b" style="left:703px;top:593px;width:1px;height:18px;background:#c2bdac;"></div>
<div class="b" style="left:984px;top:593px;width:1px;height:18px;background:#c2bdac;"></div>
<div class="b" style="left:1140px;top:593px;width:1px;height:18px;background:#c2bdac;"></div>
<div class="b" style="left:1376px;top:593px;width:1px;height:18px;background:#c2bdac;"></div>
<div class="b" style="left:1528px;top:593px;width:1px;height:18px;background:#c2bdac;"></div>
<div class="t" style="left:92px;top:594.50px;font-size:13px;line-height:16px;color:#3b3b42;letter-spacing:-0.1px;">14.01.2019</div>
<div class="t" style="left:181px;top:594.50px;font-size:13px;line-height:16px;color:#3b3b42;letter-spacing:-0.1px;">Принят на работу</div>
<div class="t" style="left:296px;top:594.50px;font-size:13px;line-height:16px;color:#3b3b42;letter-spacing:0.067px;">Механик цеха</div>
<div class="t" style="left:707px;top:594.50px;font-size:13px;line-height:16px;color:#3b3b42;letter-spacing:0.086px;">Цех №1 - Основное производство</div>
<div class="t" style="left:988px;top:594.50px;font-size:13px;line-height:16px;color:#3b3b42;letter-spacing:-0.1px;">Основное место работы</div>
<div class="b" style="left:61px;top:611px;width:1079px;height:16px;background:#fefbf1;"></div>
<div class="b" style="left:1141px;top:611px;width:235px;height:16px;background:#fefbf1;"></div>
<div class="b" style="left:1377px;top:611px;width:151px;height:16px;background:#fefbf1;"></div>
<div class="b" style="left:61px;top:627px;width:1467px;height:1px;background:#c2bdac;"></div>
<div class="b" style="left:60px;top:610px;width:1px;height:18px;background:#a8a59a;"></div>
<div class="b" style="left:1140px;top:610px;width:1px;height:18px;background:#c2bdac;"></div>
<div class="b" style="left:1376px;top:610px;width:1px;height:18px;background:#c2bdac;"></div>
<div class="b" style="left:1528px;top:610px;width:1px;height:18px;background:#c2bdac;"></div>
<div class="t" style="left:78px;top:612.00px;font-size:13px;line-height:16px;font-weight:700;color:#625131;"><span style="letter-spacing:0.040px">Коралев Иван Владимирович</span> <span style="font-weight:400;color:#4a3e2a;-webkit-text-stroke:0.4px #4a3e2a">(0000000059)</span></div>
<div class="b" style="left:31px;top:613px;width:13px;height:13px;background:#fff;box-sizing:border-box;border:1px solid #a9a9a9;border-radius:1px;"></div>
<div class="b" style="left:33px;top:619px;width:9px;height:1px;background:#333;"></div>
<div class="b" style="left:37px;top:625px;width:1px;height:20px;background:#a0a0a0;"></div>
<div class="b" style="left:37px;top:644px;width:24px;height:1px;background:#a0a0a0;"></div>
<div class="b" style="left:61px;top:628px;width:1467px;height:16px;background:#fff;"></div>
<div class="b" style="left:61px;top:644px;width:1467px;height:1px;background:#c2bdac;"></div>
<div class="b" style="left:60px;top:627px;width:1px;height:18px;background:#a8a59a;"></div>
<div class="b" style="left:177px;top:627px;width:1px;height:18px;background:#c2bdac;"></div>
<div class="b" style="left:292px;top:627px;width:1px;height:18px;background:#c2bdac;"></div>
<div class="b" style="left:703px;top:627px;width:1px;height:18px;background:#c2bdac;"></div>
<div class="b" style="left:984px;top:627px;width:1px;height:18px;background:#c2bdac;"></div>
<div class="b" style="left:1140px;top:627px;width:1px;height:18px;background:#c2bdac;"></div>
<div class="b" style="left:1376px;top:627px;width:1px;height:18px;background:#c2bdac;"></div>
<div class="b" style="left:1528px;top:627px;width:1px;height:18px;background:#c2bdac;"></div>
<div class="t" style="left:92px;top:628.50px;font-size:13px;line-height:16px;color:#3b3b42;letter-spacing:-0.1px;">15.09.2019</div>
<div class="t" style="left:181px;top:628.50px;font-size:13px;line-height:16px;color:#3b3b42;letter-spacing:-0.1px;">Принят на работу</div>
<div class="t" style="left:296px;top:628.50px;font-size:13px;line-height:16px;color:#3b3b42;letter-spacing:0.066px;">Начальник отдела ПжБ, ГО и ЧС</div>
<div class="t" style="left:707px;top:628.50px;font-size:13px;line-height:16px;color:#3b3b42;letter-spacing:0.078px;">Отдел Пжб, ГО и ЧС</div>
<div class="t" style="left:988px;top:628.50px;font-size:13px;line-height:16px;color:#3b3b42;letter-spacing:-0.1px;">Основное место работы</div>
<div class="b" style="left:61px;top:645px;width:1079px;height:16px;background:#fefbf1;"></div>
<div class="b" style="left:1141px;top:645px;width:235px;height:16px;background:#fefbf1;"></div>
<div class="b" style="left:1377px;top:645px;width:151px;height:16px;background:#fefbf1;"></div>
<div class="b" style="left:61px;top:661px;width:1467px;height:1px;background:#c2bdac;"></div>
<div class="b" style="left:60px;top:644px;width:1px;height:18px;background:#a8a59a;"></div>
<div class="b" style="left:1140px;top:644px;width:1px;height:18px;background:#c2bdac;"></div>
<div class="b" style="left:1376px;top:644px;width:1px;height:18px;background:#c2bdac;"></div>
<div class="b" style="left:1528px;top:644px;width:1px;height:18px;background:#c2bdac;"></div>
<div class="t" style="left:78px;top:646.00px;font-size:13px;line-height:16px;font-weight:700;color:#625131;"><span style="letter-spacing:0.165px">Крымова Елена Захаровна</span> <span style="font-weight:400;color:#4a3e2a;-webkit-text-stroke:0.4px #4a3e2a">(0000000021)</span></div>
<div class="b" style="left:31px;top:647px;width:13px;height:13px;background:#fff;box-sizing:border-box;border:1px solid #a9a9a9;border-radius:1px;"></div>
<div class="b" style="left:33px;top:653px;width:9px;height:1px;background:#333;"></div>
<div class="b" style="left:37px;top:659px;width:1px;height:20px;background:#a0a0a0;"></div>
<div class="b" style="left:37px;top:678px;width:24px;height:1px;background:#a0a0a0;"></div>
<div class="b" style="left:61px;top:662px;width:1467px;height:16px;background:#fff;"></div>
<div class="b" style="left:61px;top:678px;width:1467px;height:1px;background:#c2bdac;"></div>
<div class="b" style="left:60px;top:661px;width:1px;height:18px;background:#a8a59a;"></div>
<div class="b" style="left:177px;top:661px;width:1px;height:18px;background:#c2bdac;"></div>
<div class="b" style="left:292px;top:661px;width:1px;height:18px;background:#c2bdac;"></div>
<div class="b" style="left:703px;top:661px;width:1px;height:18px;background:#c2bdac;"></div>
<div class="b" style="left:984px;top:661px;width:1px;height:18px;background:#c2bdac;"></div>
<div class="b" style="left:1140px;top:661px;width:1px;height:18px;background:#c2bdac;"></div>
<div class="b" style="left:1376px;top:661px;width:1px;height:18px;background:#c2bdac;"></div>
<div class="b" style="left:1528px;top:661px;width:1px;height:18px;background:#c2bdac;"></div>
<div class="t" style="left:92px;top:662.50px;font-size:13px;line-height:16px;color:#3b3b42;letter-spacing:-0.1px;">14.01.2019</div>
<div class="t" style="left:181px;top:662.50px;font-size:13px;line-height:16px;color:#3b3b42;letter-spacing:-0.1px;">Принят на работу</div>
<div class="t" style="left:296px;top:662.50px;font-size:13px;line-height:16px;color:#3b3b42;letter-spacing:0.189px;">Кладовщик</div>
<div class="t" style="left:707px;top:662.50px;font-size:13px;line-height:16px;color:#3b3b42;letter-spacing:0.08px;">Цех №1 - Механическая служба</div>
<div class="t" style="left:988px;top:662.50px;font-size:13px;line-height:16px;color:#3b3b42;letter-spacing:-0.1px;">Основное место работы</div>
<div class="b" style="left:61px;top:679px;width:1079px;height:16px;background:#fefbf1;"></div>
<div class="b" style="left:1141px;top:679px;width:235px;height:16px;background:#fefbf1;"></div>
<div class="b" style="left:1377px;top:679px;width:151px;height:16px;background:#fefbf1;"></div>
<div class="b" style="left:61px;top:695px;width:1467px;height:1px;background:#c2bdac;"></div>
<div class="b" style="left:60px;top:678px;width:1px;height:18px;background:#a8a59a;"></div>
<div class="b" style="left:1140px;top:678px;width:1px;height:18px;background:#c2bdac;"></div>
<div class="b" style="left:1376px;top:678px;width:1px;height:18px;background:#c2bdac;"></div>
<div class="b" style="left:1528px;top:678px;width:1px;height:18px;background:#c2bdac;"></div>
<div class="t" style="left:78px;top:680.00px;font-size:13px;line-height:16px;font-weight:700;color:#625131;"><span style="letter-spacing:0.088px">Кузиев Артем Александрович</span> <span style="font-weight:400;color:#4a3e2a;-webkit-text-stroke:0.4px #4a3e2a">(0000000052)</span></div>
<div class="b" style="left:31px;top:681px;width:13px;height:13px;background:#fff;box-sizing:border-box;border:1px solid #a9a9a9;border-radius:1px;"></div>
<div class="b" style="left:33px;top:687px;width:9px;height:1px;background:#333;"></div>
<div class="b" style="left:37px;top:693px;width:1px;height:20px;background:#a0a0a0;"></div>
<div class="b" style="left:37px;top:712px;width:24px;height:1px;background:#a0a0a0;"></div>
<div class="b" style="left:61px;top:696px;width:1467px;height:16px;background:#fff;"></div>
<div class="b" style="left:61px;top:712px;width:1467px;height:1px;background:#c2bdac;"></div>
<div class="b" style="left:60px;top:695px;width:1px;height:18px;background:#a8a59a;"></div>
<div class="b" style="left:177px;top:695px;width:1px;height:18px;background:#c2bdac;"></div>
<div class="b" style="left:292px;top:695px;width:1px;height:18px;background:#c2bdac;"></div>
<div class="b" style="left:703px;top:695px;width:1px;height:18px;background:#c2bdac;"></div>
<div class="b" style="left:984px;top:695px;width:1px;height:18px;background:#c2bdac;"></div>
<div class="b" style="left:1140px;top:695px;width:1px;height:18px;background:#c2bdac;"></div>
<div class="b" style="left:1376px;top:695px;width:1px;height:18px;background:#c2bdac;"></div>
<div class="b" style="left:1528px;top:695px;width:1px;height:18px;background:#c2bdac;"></div>
<div class="t" style="left:92px;top:696.50px;font-size:13px;line-height:16px;color:#3b3b42;letter-spacing:-0.1px;">14.01.2019</div>
<div class="t" style="left:181px;top:696.50px;font-size:13px;line-height:16px;color:#3b3b42;letter-spacing:-0.1px;">Принят на работу</div>
<div class="t" style="left:296px;top:696.50px;font-size:13px;line-height:16px;color:#3b3b42;letter-spacing:-0.132px;">Слесарь по топливной аппаратуре</div>
<div class="t" style="left:707px;top:696.50px;font-size:13px;line-height:16px;color:#3b3b42;letter-spacing:-0.02px;">Транспортный цех - Механическая служба</div>
<div class="t" style="left:988px;top:696.50px;font-size:13px;line-height:16px;color:#3b3b42;letter-spacing:-0.1px;">Основное место работы</div>
<div class="b" style="left:61px;top:713px;width:1079px;height:16px;background:#fefbf1;"></div>
<div class="b" style="left:1141px;top:713px;width:235px;height:16px;background:#fefbf1;"></div>
<div class="b" style="left:1377px;top:713px;width:151px;height:16px;background:#fefbf1;"></div>
<div class="b" style="left:61px;top:729px;width:1467px;height:1px;background:#c2bdac;"></div>
<div class="b" style="left:60px;top:712px;width:1px;height:18px;background:#a8a59a;"></div>
<div class="b" style="left:1140px;top:712px;width:1px;height:18px;background:#c2bdac;"></div>
<div class="b" style="left:1376px;top:712px;width:1px;height:18px;background:#c2bdac;"></div>
<div class="b" style="left:1528px;top:712px;width:1px;height:18px;background:#c2bdac;"></div>
<div class="t" style="left:78px;top:714.00px;font-size:13px;line-height:16px;font-weight:700;color:#625131;"><span style="letter-spacing:0.104px">Кузьмина Анастасия Федоровна</span> <span style="font-weight:400;color:#4a3e2a;-webkit-text-stroke:0.4px #4a3e2a">(0000000040)</span></div>
<div class="b" style="left:31px;top:715px;width:13px;height:13px;background:#fff;box-sizing:border-box;border:1px solid #a9a9a9;border-radius:1px;"></div>
<div class="b" style="left:33px;top:721px;width:9px;height:1px;background:#333;"></div>
<div class="b" style="left:37px;top:727px;width:1px;height:20px;background:#a0a0a0;"></div>
<div class="b" style="left:37px;top:746px;width:24px;height:1px;background:#a0a0a0;"></div>
<div class="b" style="left:61px;top:730px;width:1467px;height:16px;background:#fff;"></div>
<div class="b" style="left:61px;top:746px;width:1467px;height:1px;background:#c2bdac;"></div>
<div class="b" style="left:60px;top:729px;width:1px;height:18px;background:#a8a59a;"></div>
<div class="b" style="left:177px;top:729px;width:1px;height:18px;background:#c2bdac;"></div>
<div class="b" style="left:292px;top:729px;width:1px;height:18px;background:#c2bdac;"></div>
<div class="b" style="left:703px;top:729px;width:1px;height:18px;background:#c2bdac;"></div>
<div class="b" style="left:984px;top:729px;width:1px;height:18px;background:#c2bdac;"></div>
<div class="b" style="left:1140px;top:729px;width:1px;height:18px;background:#c2bdac;"></div>
<div class="b" style="left:1376px;top:729px;width:1px;height:18px;background:#c2bdac;"></div>
<div class="b" style="left:1528px;top:729px;width:1px;height:18px;background:#c2bdac;"></div>
<div class="t" style="left:92px;top:730.50px;font-size:13px;line-height:16px;color:#3b3b42;letter-spacing:-0.1px;">14.01.2019</div>
<div class="t" style="left:181px;top:730.50px;font-size:13px;line-height:16px;color:#3b3b42;letter-spacing:-0.1px;">Принят на работу</div>
<div class="t" style="left:296px;top:730.50px;font-size:13px;line-height:16px;color:#3b3b42;letter-spacing:-0.039px;">Медицинская сестра</div>
<div class="t" style="left:707px;top:730.50px;font-size:13px;line-height:16px;color:#3b3b42;letter-spacing:0.071px;">Медицинский пункт</div>
<div class="t" style="left:988px;top:730.50px;font-size:13px;line-height:16px;color:#3b3b42;letter-spacing:-0.1px;">Основное место работы</div>
<div class="b" style="left:61px;top:747px;width:1079px;height:16px;background:#fefbf1;"></div>
<div class="b" style="left:1141px;top:747px;width:235px;height:16px;background:#fefbf1;"></div>
<div class="b" style="left:1377px;top:747px;width:151px;height:16px;background:#fefbf1;"></div>
<div class="b" style="left:61px;top:763px;width:1467px;height:1px;background:#c2bdac;"></div>
<div class="b" style="left:60px;top:746px;width:1px;height:18px;background:#a8a59a;"></div>
<div class="b" style="left:1140px;top:746px;width:1px;height:18px;background:#c2bdac;"></div>
<div class="b" style="left:1376px;top:746px;width:1px;height:18px;background:#c2bdac;"></div>
<div class="b" style="left:1528px;top:746px;width:1px;height:18px;background:#c2bdac;"></div>
<div class="t" style="left:78px;top:748.00px;font-size:13px;line-height:16px;font-weight:700;color:#625131;"><span style="letter-spacing:0.117px">Курганова Влада Ивановна</span> <span style="font-weight:400;color:#4a3e2a;-webkit-text-stroke:0.4px #4a3e2a">(0000000009)</span></div>
<div class="b" style="left:31px;top:749px;width:13px;height:13px;background:#fff;box-sizing:border-box;border:1px solid #a9a9a9;border-radius:1px;"></div>
<div class="b" style="left:33px;top:755px;width:9px;height:1px;background:#333;"></div>
<div class="b" style="left:37px;top:761px;width:1px;height:20px;background:#a0a0a0;"></div>
<div class="b" style="left:37px;top:780px;width:24px;height:1px;background:#a0a0a0;"></div>
<div class="b" style="left:61px;top:764px;width:1467px;height:16px;background:#fff;"></div>
<div class="b" style="left:61px;top:780px;width:1467px;height:1px;background:#c2bdac;"></div>
<div class="b" style="left:60px;top:763px;width:1px;height:18px;background:#a8a59a;"></div>
<div class="b" style="left:177px;top:763px;width:1px;height:18px;background:#c2bdac;"></div>
<div class="b" style="left:292px;top:763px;width:1px;height:18px;background:#c2bdac;"></div>
<div class="b" style="left:703px;top:763px;width:1px;height:18px;background:#c2bdac;"></div>
<div class="b" style="left:984px;top:763px;width:1px;height:18px;background:#c2bdac;"></div>
<div class="b" style="left:1140px;top:763px;width:1px;height:18px;background:#c2bdac;"></div>
<div class="b" style="left:1376px;top:763px;width:1px;height:18px;background:#c2bdac;"></div>
<div class="b" style="left:1528px;top:763px;width:1px;height:18px;background:#c2bdac;"></div>
<div class="t" style="left:92px;top:764.50px;font-size:13px;line-height:16px;color:#3b3b42;letter-spacing:-0.1px;">14.01.2019</div>
<div class="t" style="left:181px;top:764.50px;font-size:13px;line-height:16px;color:#3b3b42;letter-spacing:-0.1px;">Принят на работу</div>
<div class="t" style="left:296px;top:764.50px;font-size:13px;line-height:16px;color:#3b3b42;letter-spacing:-0.157px;">Начальник лаборатории</div>
<div class="t" style="left:707px;top:764.50px;font-size:13px;line-height:16px;color:#3b3b42;letter-spacing:-0.107px;">ЦХЛ (Центральная химическая лаборатория)</div>
<div class="t" style="left:988px;top:764.50px;font-size:13px;line-height:16px;color:#3b3b42;letter-spacing:-0.1px;">Основное место работы</div>
<div class="b" style="left:61px;top:781px;width:1079px;height:16px;background:#fefbf1;"></div>
<div class="b" style="left:1141px;top:781px;width:235px;height:16px;background:#fefbf1;"></div>
<div class="b" style="left:1377px;top:781px;width:151px;height:16px;background:#fefbf1;"></div>
<div class="b" style="left:61px;top:797px;width:1467px;height:1px;background:#c2bdac;"></div>
<div class="b" style="left:60px;top:780px;width:1px;height:18px;background:#a8a59a;"></div>
<div class="b" style="left:1140px;top:780px;width:1px;height:18px;background:#c2bdac;"></div>
<div class="b" style="left:1376px;top:780px;width:1px;height:18px;background:#c2bdac;"></div>
<div class="b" style="left:1528px;top:780px;width:1px;height:18px;background:#c2bdac;"></div>
<div class="t" style="left:78px;top:782.00px;font-size:13px;line-height:16px;font-weight:700;color:#625131;"><span style="letter-spacing:0.028px">Логинов Максим Филиппович</span> <span style="font-weight:400;color:#4a3e2a;-webkit-text-stroke:0.4px #4a3e2a">(0000000017)</span></div>
<div class="b" style="left:31px;top:783px;width:13px;height:13px;background:#fff;box-sizing:border-box;border:1px solid #a9a9a9;border-radius:1px;"></div>
<div class="b" style="left:33px;top:789px;width:9px;height:1px;background:#333;"></div>
<div class="b" style="left:37px;top:795px;width:1px;height:20px;background:#a0a0a0;"></div>
<div class="b" style="left:37px;top:814px;width:24px;height:1px;background:#a0a0a0;"></div>
<div class="b" style="left:61px;top:798px;width:1467px;height:16px;background:#fff;"></div>
<div class="b" style="left:61px;top:814px;width:1467px;height:1px;background:#c2bdac;"></div>
<div class="b" style="left:60px;top:797px;width:1px;height:18px;background:#a8a59a;"></div>
<div class="b" style="left:177px;top:797px;width:1px;height:18px;background:#c2bdac;"></div>
<div class="b" style="left:292px;top:797px;width:1px;height:18px;background:#c2bdac;"></div>
<div class="b" style="left:703px;top:797px;width:1px;height:18px;background:#c2bdac;"></div>
<div class="b" style="left:984px;top:797px;width:1px;height:18px;background:#c2bdac;"></div>
<div class="b" style="left:1140px;top:797px;width:1px;height:18px;background:#c2bdac;"></div>
<div class="b" style="left:1376px;top:797px;width:1px;height:18px;background:#c2bdac;"></div>
<div class="b" style="left:1528px;top:797px;width:1px;height:18px;background:#c2bdac;"></div>
<div class="t" style="left:92px;top:798.50px;font-size:13px;line-height:16px;color:#3b3b42;letter-spacing:-0.1px;">14.01.2019</div>
<div class="t" style="left:181px;top:798.50px;font-size:13px;line-height:16px;color:#3b3b42;letter-spacing:-0.1px;">Принят на работу</div>
<div class="t" style="left:296px;top:798.50px;font-size:13px;line-height:16px;color:#3b3b42;letter-spacing:-0.127px;">Аппаратчик нагрева теплоносителей</div>
<div class="t" style="left:707px;top:798.50px;font-size:13px;line-height:16px;color:#3b3b42;letter-spacing:0.086px;">Цех №1 - Основное производство</div>
<div class="t" style="left:988px;top:798.50px;font-size:13px;line-height:16px;color:#3b3b42;letter-spacing:-0.1px;">Основное место работы</div>
<div class="b" style="left:61px;top:815px;width:1079px;height:16px;background:#fefbf1;"></div>
<div class="b" style="left:1141px;top:815px;width:235px;height:16px;background:#fefbf1;"></div>
<div class="b" style="left:1377px;top:815px;width:151px;height:16px;background:#fefbf1;"></div>
<div class="b" style="left:61px;top:831px;width:1467px;height:1px;background:#c2bdac;"></div>
<div class="b" style="left:60px;top:814px;width:1px;height:18px;background:#a8a59a;"></div>
<div class="b" style="left:1140px;top:814px;width:1px;height:18px;background:#c2bdac;"></div>
<div class="b" style="left:1376px;top:814px;width:1px;height:18px;background:#c2bdac;"></div>
<div class="b" style="left:1528px;top:814px;width:1px;height:18px;background:#c2bdac;"></div>
<div class="t" style="left:78px;top:816.00px;font-size:13px;line-height:16px;font-weight:700;color:#625131;"><span style="letter-spacing:0.112px">Мазурин Виктор Валериевич</span> <span style="font-weight:400;color:#4a3e2a;-webkit-text-stroke:0.4px #4a3e2a">(0000000035)</span></div>
<div class="b" style="left:31px;top:817px;width:13px;height:13px;background:#fff;box-sizing:border-box;border:1px solid #a9a9a9;border-radius:1px;"></div>
<div class="b" style="left:33px;top:823px;width:9px;height:1px;background:#333;"></div>
<div class="b" style="left:37px;top:829px;width:1px;height:20px;background:#a0a0a0;"></div>
<div class="b" style="left:37px;top:848px;width:24px;height:1px;background:#a0a0a0;"></div>
<div class="b" style="left:61px;top:832px;width:1467px;height:16px;background:#fff;"></div>
<div class="b" style="left:61px;top:848px;width:1467px;height:1px;background:#c2bdac;"></div>
<div class="b" style="left:60px;top:831px;width:1px;height:18px;background:#a8a59a;"></div>
<div class="b" style="left:177px;top:831px;width:1px;height:18px;background:#c2bdac;"></div>
<div class="b" style="left:292px;top:831px;width:1px;height:18px;background:#c2bdac;"></div>
<div class="b" style="left:703px;top:831px;width:1px;height:18px;background:#c2bdac;"></div>
<div class="b" style="left:984px;top:831px;width:1px;height:18px;background:#c2bdac;"></div>
<div class="b" style="left:1140px;top:831px;width:1px;height:18px;background:#c2bdac;"></div>
<div class="b" style="left:1376px;top:831px;width:1px;height:18px;background:#c2bdac;"></div>
<div class="b" style="left:1528px;top:831px;width:1px;height:18px;background:#c2bdac;"></div>
<div class="t" style="left:92px;top:832.50px;font-size:13px;line-height:16px;color:#3b3b42;letter-spacing:-0.1px;">14.01.2019</div>
<div class="t" style="left:181px;top:832.50px;font-size:13px;line-height:16px;color:#3b3b42;letter-spacing:-0.1px;">Принят на работу</div>
<div class="t" style="left:296px;top:832.50px;font-size:13px;line-height:16px;color:#3b3b42;letter-spacing:-0.085px;">Электромонтёр по ремонту и обслуживанию электрооборудования</div>
<div class="t" style="left:707px;top:832.50px;font-size:13px;line-height:16px;color:#3b3b42;letter-spacing:-0.012px;">Электроцех - Основное производство</div>
<div class="t" style="left:988px;top:832.50px;font-size:13px;line-height:16px;color:#3b3b42;letter-spacing:-0.1px;">Основное место работы</div>
<div class="b" style="left:61px;top:849px;width:1079px;height:16px;background:#fefbf1;"></div>
<div class="b" style="left:1141px;top:849px;width:235px;height:16px;background:#fefbf1;"></div>
<div class="b" style="left:1377px;top:849px;width:151px;height:16px;background:#fefbf1;"></div>
<div class="b" style="left:61px;top:865px;width:1467px;height:1px;background:#c2bdac;"></div>
<div class="b" style="left:60px;top:848px;width:1px;height:18px;background:#a8a59a;"></div>
<div class="b" style="left:1140px;top:848px;width:1px;height:18px;background:#c2bdac;"></div>
<div class="b" style="left:1376px;top:848px;width:1px;height:18px;background:#c2bdac;"></div>
<div class="b" style="left:1528px;top:848px;width:1px;height:18px;background:#c2bdac;"></div>
<div class="t" style="left:78px;top:850.00px;font-size:13px;line-height:16px;font-weight:700;color:#625131;"><span style="letter-spacing:0.077px">Маликов Ян Серафимович</span> <span style="font-weight:400;color:#4a3e2a;-webkit-text-stroke:0.4px #4a3e2a">(0000000036)</span></div>
<div class="b" style="left:31px;top:851px;width:13px;height:13px;background:#fff;box-sizing:border-box;border:1px solid #a9a9a9;border-radius:1px;"></div>
<div class="b" style="left:33px;top:857px;width:9px;height:1px;background:#333;"></div>
<div class="b" style="left:37px;top:863px;width:1px;height:20px;background:#a0a0a0;"></div>
<div class="b" style="left:37px;top:882px;width:24px;height:1px;background:#a0a0a0;"></div>
<div class="b" style="left:61px;top:866px;width:1467px;height:16px;background:#fff;"></div>
<div class="b" style="left:61px;top:882px;width:1467px;height:1px;background:#c2bdac;"></div>
<div class="b" style="left:60px;top:865px;width:1px;height:18px;background:#a8a59a;"></div>
<div class="b" style="left:177px;top:865px;width:1px;height:18px;background:#c2bdac;"></div>
<div class="b" style="left:292px;top:865px;width:1px;height:18px;background:#c2bdac;"></div>
<div class="b" style="left:703px;top:865px;width:1px;height:18px;background:#c2bdac;"></div>
<div class="b" style="left:984px;top:865px;width:1px;height:18px;background:#c2bdac;"></div>
<div class="b" style="left:1140px;top:865px;width:1px;height:18px;background:#c2bdac;"></div>
<div class="b" style="left:1376px;top:865px;width:1px;height:18px;background:#c2bdac;"></div>
<div class="b" style="left:1528px;top:865px;width:1px;height:18px;background:#c2bdac;"></div>
<div class="t" style="left:92px;top:866.50px;font-size:13px;line-height:16px;color:#3b3b42;letter-spacing:-0.1px;">14.01.2019</div>
<div class="t" style="left:181px;top:866.50px;font-size:13px;line-height:16px;color:#3b3b42;letter-spacing:-0.1px;">Принят на работу</div>
<div class="t" style="left:296px;top:866.50px;font-size:13px;line-height:16px;color:#3b3b42;letter-spacing:-0.085px;">Электромонтёр по ремонту и обслуживанию электрооборудования</div>
<div class="t" style="left:707px;top:866.50px;font-size:13px;line-height:16px;color:#3b3b42;letter-spacing:-0.012px;">Электроцех - Основное производство</div>
<div class="t" style="left:988px;top:866.50px;font-size:13px;line-height:16px;color:#3b3b42;letter-spacing:-0.1px;">Основное место работы</div>
<div class="b" style="left:22px;top:254px;width:1px;height:623px;background:#a0a0a0;"></div>
<div class="b" style="left:61px;top:539px;width:1083px;height:24px;box-sizing:border-box;border:2px solid #e9c95a;border-left:none;"></div>
</div>
</body></html>
